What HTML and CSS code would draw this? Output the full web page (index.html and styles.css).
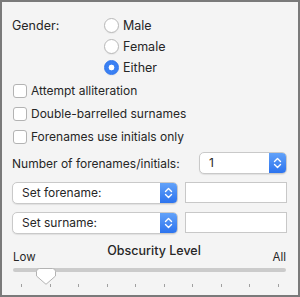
FILE: index.html
```html
<!doctype html>
<html>
<head>
    <meta charset="utf-8">
    <title>Name options</title>
    <link rel="stylesheet" href="styles.css">
</head>
<body>
    <div class="panel">
        <div class="gender">
            <span class="gender-label">Gender:</span>
            <div class="radios">
                <div class="radio-row"><span class="radio"></span>Male</div>
                <div class="radio-row"><span class="radio"></span>Female</div>
                <div class="radio-row"><span class="radio on"></span>Either</div>
            </div>
        </div>

        <div class="checks">
            <div class="check-row"><span class="check"></span>Attempt alliteration</div>
            <div class="check-row"><span class="check"></span>Double-barrelled surnames</div>
            <div class="check-row"><span class="check"></span>Forenames use initials only</div>
        </div>

        <div class="count-row">
            <span>Number of forenames/initials:</span>
            <div class="popup count-popup">
                <span class="popup-text">1</span>
                <span class="popup-arrows">
                    <svg width="9" height="12" viewBox="0 0 9 12"><path d="M1.5 4.5 L4.5 1.5 L7.5 4.5 M1.5 7.5 L4.5 10.5 L7.5 7.5" fill="none" stroke="#fff" stroke-width="1.4" stroke-linecap="round" stroke-linejoin="round"/></svg>
                </span>
            </div>
        </div>

        <div class="set-row">
            <div class="popup set-popup">
                <span class="popup-text">Set forename:</span>
                <span class="popup-arrows">
                    <svg width="9" height="12" viewBox="0 0 9 12"><path d="M1.5 4.5 L4.5 1.5 L7.5 4.5 M1.5 7.5 L4.5 10.5 L7.5 7.5" fill="none" stroke="#fff" stroke-width="1.4" stroke-linecap="round" stroke-linejoin="round"/></svg>
                </span>
            </div>
            <div class="field"></div>
        </div>
        <div class="set-row">
            <div class="popup set-popup">
                <span class="popup-text">Set surname:</span>
                <span class="popup-arrows">
                    <svg width="9" height="12" viewBox="0 0 9 12"><path d="M1.5 4.5 L4.5 1.5 L7.5 4.5 M1.5 7.5 L4.5 10.5 L7.5 7.5" fill="none" stroke="#fff" stroke-width="1.4" stroke-linecap="round" stroke-linejoin="round"/></svg>
                </span>
            </div>
            <div class="field"></div>
        </div>

        <div class="slider-block">
            <div class="slider-labels">
                <span class="end-label">Low</span>
                <span class="slider-title">Obscurity Level</span>
                <span class="end-label">All</span>
            </div>
            <div class="slider">
                <div class="track"></div>
                <svg class="knob" width="20" height="17" viewBox="0 0 20 17"><path d="M3.5 0.5 H16.5 Q19.5 0.5 19.5 3.5 V8 L10 16.3 L0.5 8 V3.5 Q0.5 0.5 3.5 0.5 Z" fill="#fff" stroke="#b3b3b3" stroke-width="1"/></svg>
            </div>
            <div class="ticks">
                <i></i><i></i><i></i><i></i><i></i><i></i><i></i><i></i><i></i><i></i>
            </div>
        </div>
    </div>
</body>
</html>
```

FILE: styles.css
```css
body {
    margin: 0;
    padding: 0;
    font: 12px 'Inter', 'Liberation Sans', sans-serif;
    color: #262626;
}

.panel {
    width: 300px;
    height: 297px;
    box-sizing: border-box;
    border: 2px solid #7a7a7a;
    background: #f4f4f4;
    padding: 13px 11px 0 10px;
}

.gender {
    display: flex;
}

.gender-label {
    width: 92px;
    line-height: 21px;
    font-size: 12.5px;
}

.radios {
    display: flex;
    flex-direction: column;
}

.radio-row {
    display: flex;
    align-items: center;
    height: 21px;
    font-size: 12.5px;
}

.radio {
    width: 13px;
    height: 13px;
    border: 1px solid #b8b8b8;
    border-radius: 50%;
    background: #fff;
    margin-right: 4px;
    box-sizing: content-box;
    box-shadow: 0 1px 1px rgba(0,0,0,0.05);
}

.radio.on {
    border-color: #2f75ec;
    background: radial-gradient(circle, #fff 0, #fff 2.6px, #3a80f3 3.2px);
}

.checks {
    margin-top: 1px;
}

.check-row {
    display: flex;
    align-items: center;
    height: 23px;
}

.check {
    width: 12px;
    height: 12px;
    border: 1px solid #b3b3b3;
    border-radius: 3px;
    background: #fff;
    margin: 0 4px 0 1px;
}

.count-row {
    display: flex;
    align-items: center;
    justify-content: space-between;
    margin-top: 4px;
    height: 22px;
}

.popup {
    display: flex;
    height: 20px;
    background: #fff;
    border: 1px solid #c9c9c9;
    border-radius: 5px;
    overflow: hidden;
    box-shadow: 0 1px 1px rgba(0,0,0,0.08);
}

.popup-text {
    flex: 1;
    padding-left: 9px;
    line-height: 20px;
}

.popup-arrows {
    width: 17px;
    display: flex;
    align-items: center;
    justify-content: center;
    background: linear-gradient(#62a2f9, #2c73ee);
}

.count-popup {
    width: 86px;
}

.set-row {
    display: flex;
    justify-content: space-between;
    margin-top: 8px;
}

.set-popup {
    width: 164px;
}

.field {
    width: 100px;
    height: 19px;
    background: #fff;
    border: 1px solid #c8c8c8;
}

.slider-block {
    margin-top: 9px;
}

.slider-labels {
    display: flex;
    justify-content: space-between;
    align-items: flex-end;
    height: 21px;
}

.end-label {
    font-size: 11.5px;
    line-height: 14px;
    padding: 0 1px;
}

.slider-title {
    font-size: 12.5px;
    font-weight: 500;
    align-self: flex-start;
    line-height: 16px;
}

.slider {
    position: relative;
    height: 16px;
    margin-top: 4px;
}

.track {
    height: 4px;
    margin: 4px 1px 0 1px;
    border-radius: 2px;
    background: #cbcbcb;
}

.knob {
    position: absolute;
    left: 24px;
    top: 0;
}

.ticks {
    display: flex;
    justify-content: space-between;
    padding: 0 8px 0 9px;
}

.ticks i {
    width: 1px;
    height: 3px;
    background: #a0a0a0;
}
```
